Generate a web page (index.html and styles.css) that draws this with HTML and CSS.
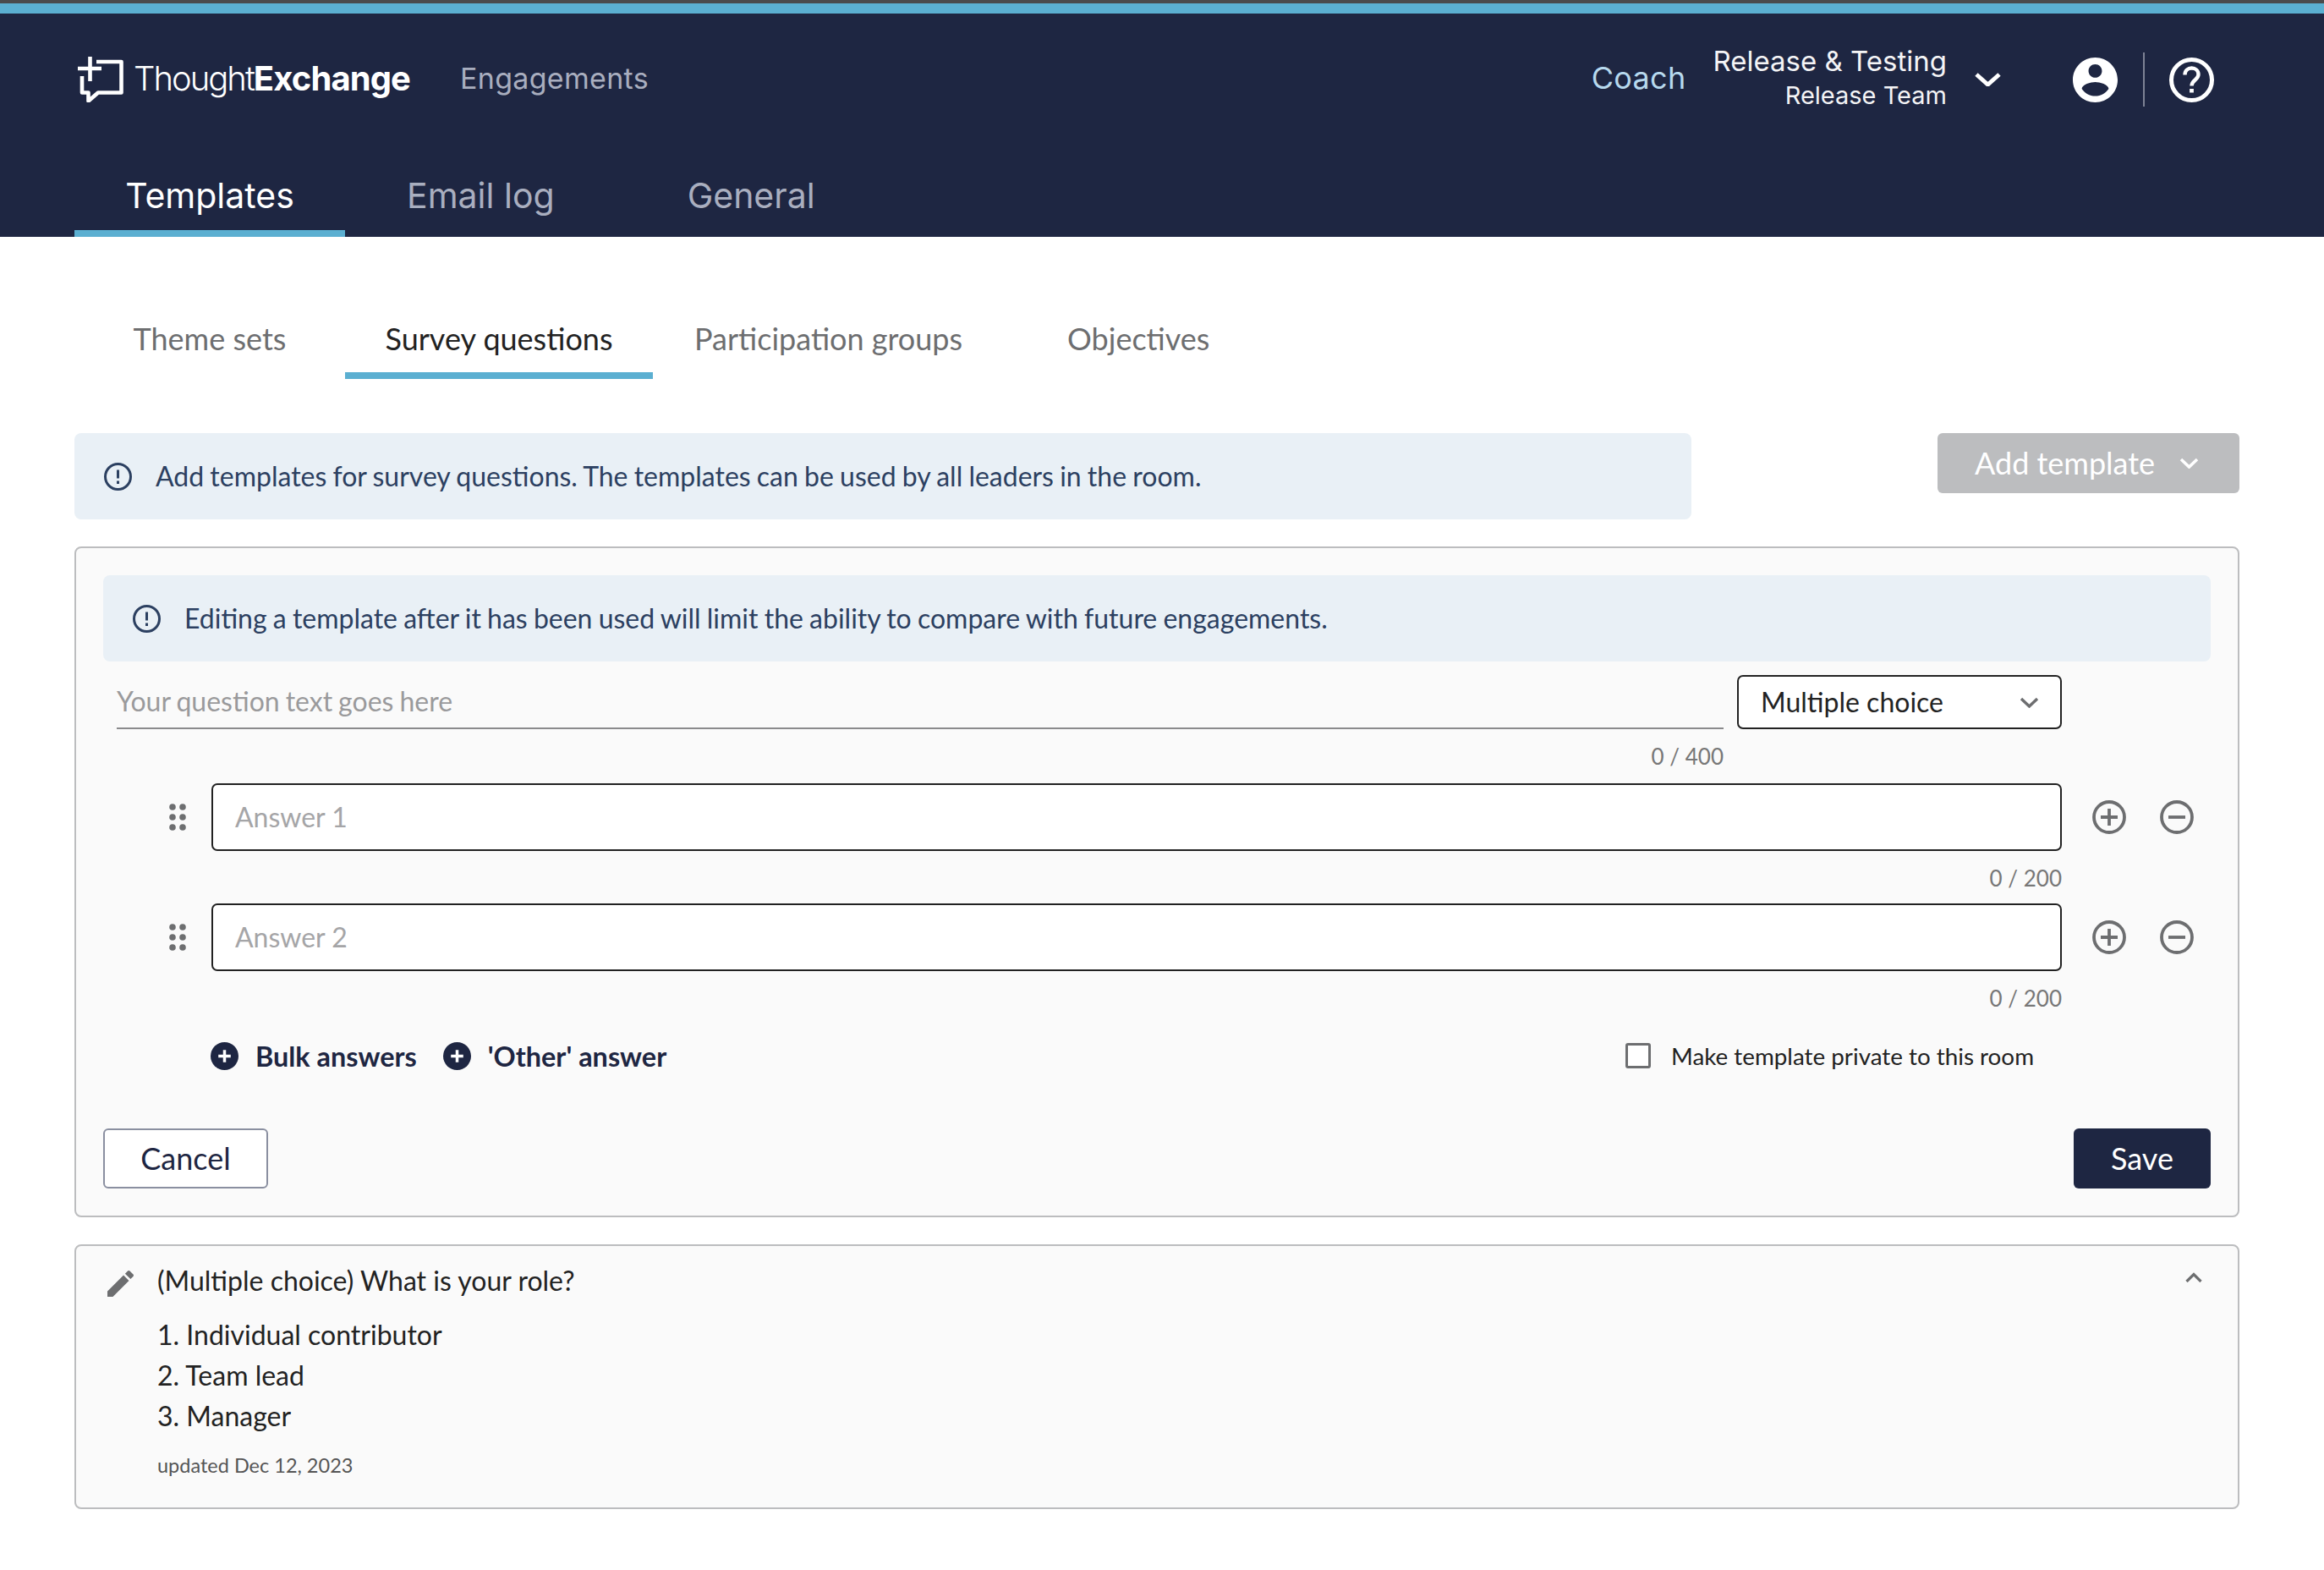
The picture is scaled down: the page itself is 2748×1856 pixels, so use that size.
FILE: index.html
```html
<!DOCTYPE html>
<html lang="en">
<head>
<meta charset="utf-8">
<title>Templates</title>
<link rel="stylesheet" href="styles.css">
</head>
<body>
<header class="header">
  <div class="header-top">
    <svg class="logo" viewBox="0 0 54 54" fill="none" stroke="#fff" stroke-width="4.6" stroke-linejoin="round"><path d="M22 6H51.5V42.5H24L12.5 52.5V42.5H5V23"/><path d="M14.5 0V29M0 14H28"/></svg>
    <div class="wordmark">Thought<b>Exchange</b></div>
    <div class="engagements">Engagements</div>
    <div class="coach">Coach</div>
    <div class="account"><div class="account-room">Release &amp; Testing</div><div class="account-team">Release Team</div></div>
    <svg class="account-chevron" viewBox="0 0 31 16" fill="none" stroke="#fff" stroke-width="5"><path d="M2 2L15.5 14L29 2"/></svg>
    <svg class="user-icon" viewBox="2 2 20 20" fill="#fff"><path d="M12 2C6.48 2 2 6.48 2 12s4.48 10 10 10 10-4.48 10-10S17.52 2 12 2zm0 3c1.66 0 3 1.34 3 3s-1.34 3-3 3-3-1.34-3-3 1.34-3 3-3zm0 14.2c-2.5 0-4.71-1.28-6-3.22.03-1.99 4-3.08 6-3.08 1.99 0 5.97 1.09 6 3.08-1.29 1.94-3.5 3.22-6 3.22z"/></svg>
    <div class="divider"></div>
    <svg class="help-icon" viewBox="0 0 53 53" fill="none" stroke="#fff" stroke-width="5"><circle cx="26.5" cy="26.5" r="24"/><path d="M18.5 20.5c0-5 3.6-8 8-8s8 3 8 7.5c0 6.5-8 6.5-8 13.5" stroke-width="4.4"/><path d="M26.5 37v4.5" stroke-width="4.8"/></svg>
  </div>
  <nav class="nav-tabs">
    <div class="nav-tab active">Templates</div>
    <div class="nav-tab email">Email log</div>
    <div class="nav-tab general">General</div>
  </nav>
</header>
<main class="main">
  <div class="sub-tabs">
    <div class="sub-tab theme">Theme sets</div>
    <div class="sub-tab active">Survey questions</div>
    <div class="sub-tab part">Participation groups</div>
    <div class="sub-tab obj">Objectives</div>
  </div>
  <div class="intro-row">
    <div class="notice wide">
      <svg class="info" viewBox="0 0 33 33" fill="none" stroke="#2c4061" stroke-width="3"><circle cx="16.5" cy="16.5" r="15"/><path d="M16.5 8.5V18.5M16.5 21.5V25"/></svg>
      <span class="notice-text">Add templates for survey questions. The templates can be used by all leaders in the room.</span>
    </div>
    <div class="add-btn"><span class="add-label">Add template</span><svg class="add-chevron" viewBox="0 0 23 13" fill="none" stroke="#fff" stroke-width="3.6"><path d="M2 2L11.5 11L21 2"/></svg></div>
  </div>
  <section class="card editor">
    <div class="notice">
      <svg class="info" viewBox="0 0 33 33" fill="none" stroke="#2c4061" stroke-width="3"><circle cx="16.5" cy="16.5" r="15"/><path d="M16.5 8.5V18.5M16.5 21.5V25"/></svg>
      <span class="notice-text">Editing a template after it has been used will limit the ability to compare with future engagements.</span>
    </div>
    <div class="question-row">
      <div class="question-input">Your question text goes here</div>
      <div class="select"><span class="select-label">Multiple choice</span><svg class="select-chevron" viewBox="0 0 23 13" fill="none" stroke="#6d6e70" stroke-width="3.4"><path d="M2 2L11.5 11L21 2"/></svg></div>
    </div>
    <div class="counter question-counter">0 / 400</div>
    <div class="answer-row first">
      <svg class="drag" viewBox="0 0 20 32" fill="#6d6e70"><circle cx="4" cy="4" r="3.8"/><circle cx="16" cy="4" r="3.8"/><circle cx="4" cy="16" r="3.8"/><circle cx="16" cy="16" r="3.8"/><circle cx="4" cy="28" r="3.8"/><circle cx="16" cy="28" r="3.8"/></svg>
      <div class="answer-input">Answer 1</div>
      <svg class="round-btn" viewBox="0 0 40 40" fill="none" stroke="#6d6e70" stroke-width="3.8"><circle cx="20" cy="20" r="18"/><path d="M20 10V30M10 20H30"/></svg>
      <svg class="round-btn" viewBox="0 0 40 40" fill="none" stroke="#6d6e70" stroke-width="3.8"><circle cx="20" cy="20" r="18"/><path d="M10 20H30"/></svg>
    </div>
    <div class="counter">0 / 200</div>
    <div class="answer-row">
      <svg class="drag" viewBox="0 0 20 32" fill="#6d6e70"><circle cx="4" cy="4" r="3.8"/><circle cx="16" cy="4" r="3.8"/><circle cx="4" cy="16" r="3.8"/><circle cx="16" cy="16" r="3.8"/><circle cx="4" cy="28" r="3.8"/><circle cx="16" cy="28" r="3.8"/></svg>
      <div class="answer-input">Answer 2</div>
      <svg class="round-btn" viewBox="0 0 40 40" fill="none" stroke="#6d6e70" stroke-width="3.8"><circle cx="20" cy="20" r="18"/><path d="M20 10V30M10 20H30"/></svg>
      <svg class="round-btn" viewBox="0 0 40 40" fill="none" stroke="#6d6e70" stroke-width="3.8"><circle cx="20" cy="20" r="18"/><path d="M10 20H30"/></svg>
    </div>
    <div class="counter">0 / 200</div>
    <div class="extras-row">
      <svg class="add-dot" viewBox="0 0 34 34"><circle cx="17" cy="17" r="17" fill="#1e2642"/><path d="M17 9.5V24.5M9.5 17H24.5" stroke="#fff" stroke-width="3.6"/></svg>
      <span class="extra-label bulk">Bulk answers</span>
      <svg class="add-dot" viewBox="0 0 34 34"><circle cx="17" cy="17" r="17" fill="#1e2642"/><path d="M17 9.5V24.5M9.5 17H24.5" stroke="#fff" stroke-width="3.6"/></svg>
      <span class="extra-label">'Other' answer</span>
      <div class="private"><span class="checkbox"></span><span>Make template private to this room</span></div>
    </div>
    <div class="actions">
      <div class="btn-cancel">Cancel</div>
      <div class="btn-save">Save</div>
    </div>
  </section>
  <section class="card saved">
    <svg class="pencil" viewBox="3 3 18 18" fill="#6d6e70"><path d="M3 17.25V21h3.75L17.81 9.94l-3.75-3.75L3 17.25zM20.71 7.04c.39-.39.39-1.02 0-1.41l-2.34-2.34c-.39-.39-1.02-.39-1.41 0l-1.83 1.83 3.75 3.75 1.83-1.83z"/></svg>
    <div class="saved-body">
      <div class="saved-title">(Multiple choice) What is your role?</div>
      <ol class="saved-list">
        <li>1. Individual contributor</li>
        <li>2. Team lead</li>
        <li>3. Manager</li>
      </ol>
      <div class="saved-date">updated Dec 12, 2023</div>
    </div>
    <svg class="collapse" viewBox="0 0 20 12" fill="none" stroke="#6d6e70" stroke-width="3.2"><path d="M1.5 11L10 2.5L18.5 11"/></svg>
  </section>
</main>
</body>
</html>
```

FILE: styles.css
```css
* { box-sizing: border-box; }
html, body { margin: 0; padding: 0; background: #fff; }
body { width: 2748px; min-height: 1856px; font-family: "Lato", "Liberation Sans", sans-serif; color: #222; }

.header { background: #1e2642; height: 280px; border-top: 4px solid #4a4a4c; }
.header::before { content: ""; display: block; height: 12px; background: #5bafd1; }
.header-top { display: flex; align-items: center; height: 156px; padding-left: 92px; font-family: "Inter", "Liberation Sans", sans-serif; }
.logo { width: 54px; height: 54px; flex: none; }
.wordmark { margin-left: 12px; margin-bottom: 4px; color: #fff; font-size: 40px; font-weight: 300; letter-spacing: -2px; }
.wordmark b { font-weight: 700; letter-spacing: -0.9px; }
.engagements { margin-left: 59px; margin-bottom: 4px; color: #a9aebf; font-size: 34px; font-weight: 400; letter-spacing: 0.3px; }
.coach { margin-left: auto; margin-right: 0; margin-bottom: 4px; color: #b7d9ee; font-size: 36px; font-weight: 400; letter-spacing: 0.3px; }
.account { margin-left: 32px; margin-bottom: 4px; color: #f4f4f6; text-align: right; }
.account-room { font-size: 33px; line-height: 42px; }
.account-team { font-size: 29px; line-height: 40px; }
.account-chevron { width: 31px; height: 16px; margin-left: 33px; flex: none; }
.user-icon { width: 53px; height: 53px; margin-left: 85px; flex: none; }
.divider { width: 2px; height: 64px; margin-left: 30px; background: #7d8294; }
.help-icon { width: 53px; height: 53px; margin-left: 29px; margin-right: 130px; flex: none; }

.nav-tabs { display: flex; height: 108px; padding-left: 88px; font-family: "Inter", "Liberation Sans", sans-serif; }
.nav-tab { height: 108px; line-height: 118px; padding: 0 61px; font-size: 41px; color: #a9aebf; }
.nav-tab.active { width: 320px; padding: 0; text-align: center; color: #fff; border-bottom: 8px solid #5bafd1; }
.nav-tab.email { margin-left: 12px; }
.nav-tab.general { margin-left: 35px; }

.main { padding: 0 100px 0 88px; }
.sub-tabs { display: flex; margin-top: 88px; height: 80px; }
.sub-tab { height: 80px; line-height: 65px; font-size: 36px; color: #6d6e70; text-align: center; }
.sub-tab.theme { width: 320px; }
.sub-tab.active { width: 364px; color: #222; border-bottom: 8px solid #5bafd1; }
.sub-tab.part { margin-left: 49px; }
.sub-tab.obj { margin-left: 124px; }

.intro-row { display: flex; justify-content: space-between; align-items: flex-start; margin-top: 64px; }
.notice { display: flex; align-items: center; height: 102px; padding-left: 35px; background: #e9f0f6; border-radius: 8px; color: #2c4061; font-size: 32px; }
.notice.wide { width: 1912px; }
.notice-text { margin-bottom: 2px; word-spacing: -1px; }
.info { width: 33px; height: 33px; margin-right: 28px; flex: none; }
.add-btn { display: flex; align-items: center; width: 357px; height: 71px; padding-left: 44px; background: #bcbdbf; border-radius: 6px; color: #fff; font-size: 36px; }
.add-label { margin-bottom: 2px; }
.add-chevron { width: 23px; height: 13px; margin-left: 29px; }

.card { border: 2px solid #bcbdbf; border-radius: 8px; background: #fafafa; }
.editor { margin-top: 32px; padding: 32px; }
.question-row { display: flex; margin-top: 16px; padding-left: 16px; }
.question-input { width: 1900px; height: 64px; line-height: 62px; border-bottom: 2px solid #8a8a8c; color: #9a9a9c; font-size: 32px; word-spacing: -1.2px; }
.select { display: flex; align-items: center; justify-content: space-between; width: 384px; height: 64px; margin-left: 16px; padding: 0 25px 0 26px; background: #fff; border: 2px solid #222; border-radius: 7px; font-size: 32px; color: #222; }
.select-label { margin-bottom: 2px; }
.select-chevron { width: 23px; height: 13px; }
.counter { height: 30px; line-height: 30px; margin-top: 17px; margin-right: 176px; text-align: right; color: #777; font-size: 26px; }
.question-counter { margin-right: 576px; }
.answer-row { display: flex; align-items: center; margin-top: 15px; padding-left: 78px; padding-right: 20px; }
.answer-row.first { margin-top: 17px; }
.drag { width: 20px; height: 32px; margin-right: 30px; flex: none; }
.answer-input { width: 2188px; height: 80px; line-height: 76px; padding-left: 26px; margin-right: 36px; background: #fff; border: 2px solid #222; border-radius: 7px; color: #a5a5a7; font-size: 32px; }
.round-btn { width: 40px; height: 40px; flex: none; }
.round-btn + .round-btn { margin-left: 40px; }
.extras-row { display: flex; align-items: center; height: 34px; margin-top: 36px; padding-left: 127px; padding-right: 209px; }
.add-dot { width: 33px; height: 33px; flex: none; }
.extra-label { margin-left: 20px; color: #1e2642; font-size: 32.4px; font-weight: 700; }
.extra-label.bulk { margin-right: 31px; }
.private { display: flex; align-items: center; margin-left: auto; font-size: 27.8px; color: #222; }
.checkbox { width: 30px; height: 30px; margin-right: 24px; border: 3.5px solid #6d6e70; border-radius: 3px; background: #fff; }
.actions { display: flex; justify-content: space-between; margin-top: 69px; }
.btn-cancel { width: 195px; height: 71px; line-height: 66px; text-align: center; border: 2px solid #8a8fa0; border-radius: 6px; background: #fff; color: #1e2642; font-size: 36px; }
.btn-save { width: 162px; height: 71px; line-height: 70px; text-align: center; border-radius: 6px; background: #1e2642; color: #fff; font-size: 36px; }

.saved { display: flex; margin-top: 32px; padding: 19px 42px 32px 37px; }
.pencil { width: 31px; height: 31px; margin-top: 10px; margin-right: 28px; flex: none; }
.saved-body { flex: 1; }
.saved-title { line-height: 44px; font-size: 32px; color: #222; }
.saved-list { list-style: none; margin: 18px 0 0; padding: 0; font-size: 32px; line-height: 48px; color: #222; }
.saved-date { margin-top: 16px; line-height: 36px; font-size: 23.5px; color: #555; }
.collapse { width: 20px; height: 12px; margin-top: 12px; flex: none; }
```
